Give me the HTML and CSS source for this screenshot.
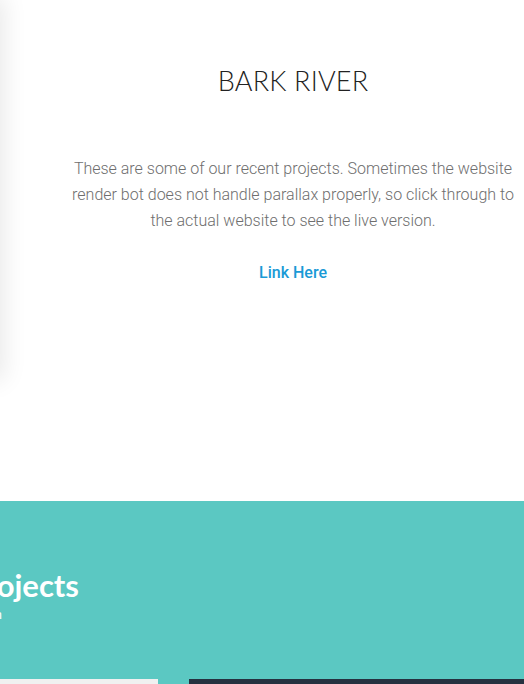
FILE: index.html
```html
<!DOCTYPE html>
<html>
<head>
<meta charset="utf-8">
<link rel="stylesheet" href="styles.css">
</head>
<body>
<section class="hero">
  <div class="side"></div>
  <div class="card">
    <h1 class="title">BARK RIVER</h1>
    <p class="desc">These are some of our recent projects. Sometimes the website render bot does not handle parallax properly, so click through to the actual website to see the live version.</p>
    <a class="link" href="#">Link Here</a>
  </div>
</section>
<section class="projects">
  <div class="projects-head">
    <h2 class="projects-title">Projects</h2>
    <p class="projects-sub">Our work in</p>
  </div>
  <div class="tiles">
    <div class="tile tile-light"></div>
    <div class="tile tile-dark"></div>
  </div>
</section>
</body>
</html>
```
FILE: styles.css
```css
html, body {
  margin: 0;
  padding: 0;
  background: #fff;
  overflow: hidden;
}
body {
  width: 524px;
  height: 684px;
}
.hero {
  height: 501px;
  background: #fff;
  display: flex;
  align-items: flex-start;
}
.side {
  flex: none;
  width: 40px;
  height: 376px;
  margin-left: -40px;
  background: #f2f2f2;
  box-shadow: 0 0 24px 4px rgba(0, 0, 0, 0.09);
}
.card {
  flex: 1;
  min-width: 0;
  height: 385px;
  box-sizing: border-box;
  display: flex;
  flex-direction: column;
  align-items: center;
  padding-top: 64px;
  padding-left: 62px;
}
.title {
  margin: 0;
  font-family: "Lato", sans-serif;
  font-weight: 300;
  font-size: 27px;
  line-height: 34px;
  color: #222;
  letter-spacing: 0.2px;
}
.desc {
  margin: 58px 0 0;
  width: 452px;
  text-align: center;
  font-family: "Roboto", sans-serif;
  font-weight: 300;
  font-size: 16px;
  line-height: 26px;
  color: #6e6e6e;
}
.link {
  margin-top: 29px;
  font-family: "Roboto", sans-serif;
  font-weight: 500;
  font-size: 16px;
  line-height: 20px;
  color: #1a9ad6;
  text-decoration: none;
}
.projects {
  background: #5bc8c2;
  height: 183px;
  display: flex;
  flex-direction: column;
}
.projects-head {
  width: 240px;
  margin-left: -161px;
  padding-top: 65px;
  text-align: right;
}
.projects-title {
  margin: 0;
  font-family: "Lato", sans-serif;
  font-weight: 700;
  font-size: 31px;
  line-height: 38px;
  color: #fff;
}
.projects-sub {
  margin: 3px 77px 0 0;
  font-family: "Roboto", sans-serif;
  font-size: 13px;
  line-height: 16px;
  color: #fff;
}
.tiles {
  margin-top: auto;
  display: flex;
  gap: 31px;
  height: 5px;
}
.tile-light {
  width: 158px;
  background: #f0f0f0;
}
.tile-dark {
  flex: 1;
  background: #263140;
}
```
